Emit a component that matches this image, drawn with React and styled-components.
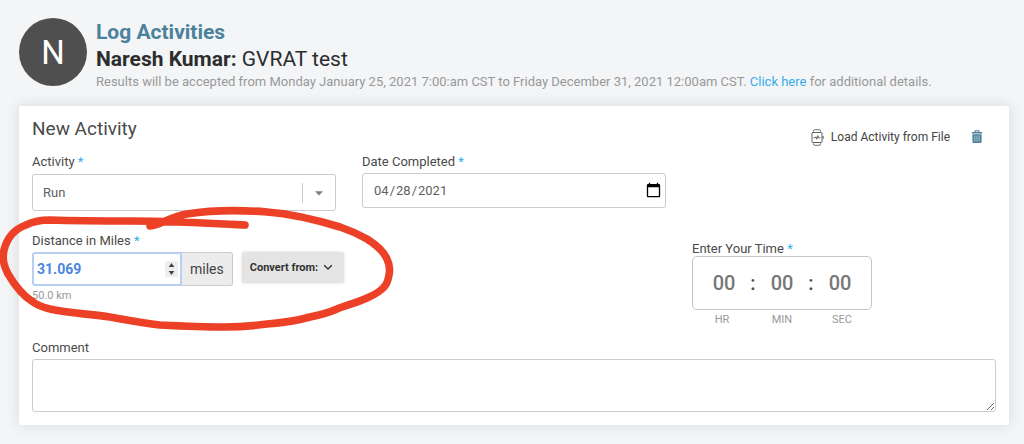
import React, { useState } from 'react';
import styled, { createGlobalStyle } from 'styled-components';

const GlobalStyle = createGlobalStyle`
  * {
    box-sizing: border-box;
  }

  body {
    margin: 0;
    background: #f3f5f7;
    color: #4a4a4a;
    font-family: Roboto, 'Liberation Sans', sans-serif;
    font-size: 14px;
  }

  input, select, textarea, button {
    font-family: inherit;
  }
`;

const Page = styled.main`
  position: relative;
  padding: 18px 15px 19px 19px;
`;

const Header = styled.header`
  display: flex;
  gap: 9px;
  margin-bottom: 14px;
`;

const Avatar = styled.div`
  display: flex;
  flex: none;
  align-items: center;
  justify-content: center;
  width: 68px;
  height: 68px;
  border-radius: 50%;
  background: #4f4f4f;
  color: #ffffff;
  font-size: 33px;
`;

const HeaderText = styled.div`
  min-width: 0;
`;

const PageTitle = styled.h1`
  margin: 0;
  color: #4b829b;
  font-size: 21px;
  font-weight: 700;
  line-height: 28px;
`;

const EventName = styled.h2`
  margin: 0;
  color: #2d2d2d;
  font-size: 21px;
  font-weight: 400;
  line-height: 26px;
`;

const EventNote = styled.p`
  margin: 0;
  color: #999999;
  font-size: 13px;
  line-height: 20px;
`;

const NoteLink = styled.a`
  color: #37aeea;
  text-decoration: none;
`;

const Card = styled.form`
  padding: 11px 13px 13px;
  background: #ffffff;
  box-shadow: 0 0 14px rgba(0, 0, 0, 0.12);
`;

const CardHead = styled.div`
  display: flex;
  align-items: flex-start;
  justify-content: space-between;
  margin-bottom: 6px;
`;

const CardTitle = styled.h3`
  margin: 0;
  font-size: 19px;
  font-weight: 400;
  line-height: 24px;
`;

const CardActions = styled.div`
  display: flex;
  align-items: center;
  gap: 21px;
  padding: 10px 13px 0 0;
`;

const ActionButton = styled.button`
  display: flex;
  align-items: center;
  gap: 7px;
  height: 20px;
  padding: 0;
  border: none;
  background: none;
  color: #444444;
  font-size: 12px;
  cursor: pointer;
`;

const Columns = styled.div`
  display: grid;
  grid-template-columns: repeat(3, minmax(0, 1fr));
  gap: 26px;
  margin-bottom: ${({ $gap }) => $gap}px;
`;

const Field = styled.div`
  display: flex;
  flex-direction: column;
`;

const TimeField = styled.fieldset`
  grid-column: 3;
  width: 180px;
  margin: 0;
  padding: 9px 0 0;
  border: none;
`;

const Label = styled.label`
  margin-bottom: 2px;
  font-size: 13px;
  line-height: 18px;
`;

const TimeLegend = styled.div`
  font-size: 13px;
  line-height: 15px;
`;

const Star = styled.span`
  color: #37aeea;
`;

const SelectBox = styled.div`
  position: relative;
  margin-top: 1px;
`;

const Select = styled.select`
  display: block;
  width: 100%;
  height: 37px;
  padding: 0 44px 0 10px;
  border: 1px solid #cccccc;
  border-radius: 3px;
  background: #ffffff;
  color: #606060;
  font-size: 13px;
  appearance: none;
`;

const SelectArrow = styled.span`
  position: absolute;
  top: 9px;
  right: 1px;
  display: flex;
  align-items: center;
  justify-content: center;
  width: 33px;
  height: 20px;
  border-left: 1px solid #cccccc;
  pointer-events: none;
`;

const DateInput = styled.input`
  width: 100%;
  height: 35px;
  padding: 0 3px 0 10px;
  border: 1px solid #cccccc;
  border-radius: 3px;
  background: #ffffff;
  color: #606060;
  font-size: 13px;

  &::-webkit-calendar-picker-indicator {
    width: 17px;
    height: 17px;
    padding: 0;
  }
`;

const DistanceRow = styled.div`
  display: flex;
  align-items: flex-start;
  gap: 9px;
`;

const InputGroup = styled.div`
  display: flex;
  height: 34px;
`;

const NumberBox = styled.div`
  display: flex;
  align-items: center;
  width: 150px;
  padding: 0 2px 0 3px;
  border: 2px solid #b7d0f2;
  border-radius: 3px 0 0 3px;
  background: #ffffff;
`;

const NumberInput = styled.input`
  flex: 1;
  min-width: 0;
  padding: 0;
  border: none;
  outline: none;
  background: none;
  color: #4a86dc;
  font-size: 14px;
  font-weight: 700;
  appearance: textfield;

  &::-webkit-inner-spin-button {
    appearance: none;
  }
`;

const Stepper = styled.div`
  display: flex;
  flex-direction: column;
  width: 13px;
  background: #eeeeee;
`;

const StepButton = styled.button`
  display: flex;
  align-items: center;
  justify-content: center;
  height: 8px;
  padding: 0;
  border: none;
  background: none;
`;

const Unit = styled.span`
  display: flex;
  align-items: center;
  padding: 0 8px;
  border: 1px solid #cccccc;
  border-left: none;
  border-radius: 0 3px 3px 0;
  background: #ececec;
  color: #444444;
  font-size: 14px;
`;

const ConvertButton = styled.button`
  display: flex;
  align-items: center;
  gap: 5px;
  height: 31px;
  padding: 0 11px 0 8px;
  border: none;
  border-radius: 2px;
  background: #e4e4e4;
  box-shadow: 0 0 3px rgba(0, 0, 0, 0.15);
  color: #333333;
  font-size: 11px;
  font-weight: 700;
  white-space: nowrap;
`;

const Hint = styled.span`
  margin-top: 3px;
  color: #999999;
  font-size: 11px;
  line-height: 14px;
`;

const TimeBox = styled.div`
  display: flex;
  align-items: center;
  justify-content: center;
  height: 54px;
  border: 1px solid #c4c4c4;
  border-radius: 5px;
  font-size: 20px;
  font-weight: 500;
`;

const TimeInput = styled.input`
  width: 40px;
  padding: 0;
  border: none;
  background: none;
  font-size: 20px;
  font-weight: 500;
  text-align: center;

  &::placeholder {
    color: #777777;
  }
`;

const Colon = styled.span`
  width: 18px;
  text-align: center;
`;

const TimeUnits = styled.div`
  display: grid;
  grid-template-columns: repeat(3, 1fr);
  margin-top: 3px;
  color: #999999;
  font-size: 11px;
  line-height: 14px;
  text-align: center;
`;

const Comment = styled.textarea`
  display: block;
  width: 100%;
  height: 53px;
  padding: 8px 11px;
  border: 1px solid #cccccc;
  border-radius: 3px;
  color: #606060;
  font-size: 13px;
  resize: vertical;
`;

const Scribble = styled.svg`
  position: absolute;
  top: 0;
  left: 0;
  pointer-events: none;
`;

const WatchIcon = () => (
  <svg width="13" height="17" viewBox="0 0 13 17" fill="none" stroke="#4f4f4f" strokeLinecap="round" strokeLinejoin="round" aria-hidden="true">
    <path d="M2.5 2.2V2Q2.5.7 3.8.7h4.4q1.3 0 1.3 1.3v.2M2.5 14.8v.2q0 1.3 1.3 1.3h4.4q1.3 0 1.3-1.3v-.2" strokeWidth=".8" />
    <rect x="1" y="3.5" width="10" height="10" rx=".8" strokeWidth=".9" />
    <path d="M12.1 7.4v2" strokeWidth="1" />
    <path d="M3 8.8h1.2l.7-1 .9 2.4 1-3.6.8 2.2H9" strokeWidth=".9" />
  </svg>
);

const TrashIcon = () => (
  <svg width="12" height="14" viewBox="0 0 12 14" fill="#4b829b" aria-hidden="true">
    <path d="M3.5 2V1q0-.7.7-.7h3.6q.7 0 .7.7v1h2.2q.5 0 .5.5v1H.8v-1q0-.5.5-.5zM4.6 2h2.8v-.7H4.6z" fillRule="evenodd" />
    <path d="M1.4 4.2h9.2v7.9q0 1-1 1H2.4q-1 0-1-1z" />
    <path d="M3.8 5.6v6M6 5.6v6M8.2 5.6v6" stroke="#b4cbd6" strokeWidth=".9" />
  </svg>
);

const CircledMark = () => (
  <Scribble width="400" height="340" viewBox="0 0 400 340" fill="none" stroke="#ec4127" strokeWidth="7.6" strokeLinecap="round" strokeLinejoin="round" aria-hidden="true">
    <path d="M150 226C161 225 169 217 187 214C213 210 241 210 267 212C293 214 317 220 340 227C352 231 360 235 367 239C378 246 384 252 387 259C390 265 390 270 389 275C388 281 387 284 384 287C380 292 374 295 367 298C356 303 347 305 337 309C328 313 320 315 310 317C296 321 282 323 267 324C252 326 239 327 225 327C202 327 180 326 160 325C143 323 127 320 110 317C90 314 67 313 50 309C42 307 37 305 33 302C23 296 14 284 8 274C4 266 2 260 4 250C7 238 15 229 26 225C34 221 42 220 50 220C79 221 105 221 132 221C170 221 207 223 245 225" />
  </Scribble>
);

const App = () => {
  const [form, setForm] = useState({
    activity: 'run',
    date: '2021-04-28',
    distance: '31.069',
    comment: ''
  });

  const handleChange = (e) => {
    setForm({ ...form, [e.target.name]: e.target.value });
  };

  const stepDistance = (amount) => {
    setForm({ ...form, distance: (Number(form.distance) + amount).toFixed(3) });
  };

  return (
    <Page>
      <GlobalStyle />
      <Header>
        <Avatar>N</Avatar>
        <HeaderText>
          <PageTitle>Log Activities</PageTitle>
          <EventName><strong>Naresh Kumar:</strong> GVRAT test</EventName>
          <EventNote>
            Results will be accepted from Monday January 25, 2021 7:00:am CST to Friday December 31, 2021 12:00am CST.{' '}
            <NoteLink href="#details">Click here</NoteLink> for additional details.
          </EventNote>
        </HeaderText>
      </Header>

      <Card onSubmit={(e) => e.preventDefault()}>
        <CardHead>
          <CardTitle>New Activity</CardTitle>
          <CardActions>
            <ActionButton type="button"><WatchIcon />Load Activity from File</ActionButton>
            <ActionButton type="button" aria-label="Delete"><TrashIcon /></ActionButton>
          </CardActions>
        </CardHead>

        <Columns $gap={21}>
          <Field>
            <Label htmlFor="activity">Activity <Star>*</Star></Label>
            <SelectBox>
              <Select id="activity" name="activity" value={form.activity} onChange={handleChange}>
                <option value="run">Run</option>
              </Select>
              <SelectArrow>
                <svg width="8" height="5" viewBox="0 0 8 5" aria-hidden="true">
                  <path d="M0 .3h8L4 4.6z" fill="#808080" />
                </svg>
              </SelectArrow>
            </SelectBox>
          </Field>
          <Field>
            <Label htmlFor="date">Date Completed <Star>*</Star></Label>
            <DateInput id="date" type="date" name="date" value={form.date} onChange={handleChange} />
          </Field>
        </Columns>

        <Columns $gap={12}>
          <Field>
            <Label htmlFor="distance">Distance in Miles <Star>*</Star></Label>
            <DistanceRow>
              <InputGroup>
                <NumberBox>
                  <NumberInput id="distance" type="number" step="any" name="distance" value={form.distance} onChange={handleChange} />
                  <Stepper>
                    <StepButton type="button" aria-label="Increase" onClick={() => stepDistance(1)}>
                      <svg width="7" height="4" viewBox="0 0 7 4"><path d="M3.5 0L6.3 4H.7z" fill="#444444" /></svg>
                    </StepButton>
                    <StepButton type="button" aria-label="Decrease" onClick={() => stepDistance(-1)}>
                      <svg width="7" height="4" viewBox="0 0 7 4"><path d="M3.5 4L.7 0h5.6z" fill="#444444" /></svg>
                    </StepButton>
                  </Stepper>
                </NumberBox>
                <Unit>miles</Unit>
              </InputGroup>
              <ConvertButton type="button">
                Convert from:
                <svg width="10" height="7" viewBox="0 0 10 7" fill="none" stroke="#333333" strokeWidth="1.4" aria-hidden="true">
                  <path d="M1.2 1.2L5 5l3.8-3.8" />
                </svg>
              </ConvertButton>
            </DistanceRow>
            <Hint>50.0 km</Hint>
          </Field>

          <TimeField aria-labelledby="time-label">
            <TimeLegend id="time-label">Enter Your Time <Star>*</Star></TimeLegend>
            <TimeBox>
              <TimeInput id="hr" type="text" placeholder="00" />
              <Colon>:</Colon>
              <TimeInput id="min" type="text" placeholder="00" />
              <Colon>:</Colon>
              <TimeInput id="sec" type="text" placeholder="00" />
            </TimeBox>
            <TimeUnits>
              <label htmlFor="hr">HR</label>
              <label htmlFor="min">MIN</label>
              <label htmlFor="sec">SEC</label>
            </TimeUnits>
          </TimeField>
        </Columns>

        <Field>
          <Label htmlFor="comment">Comment</Label>
          <Comment id="comment" name="comment" value={form.comment} onChange={handleChange} />
        </Field>
      </Card>

      <CircledMark />
    </Page>
  );
};

export default App;
